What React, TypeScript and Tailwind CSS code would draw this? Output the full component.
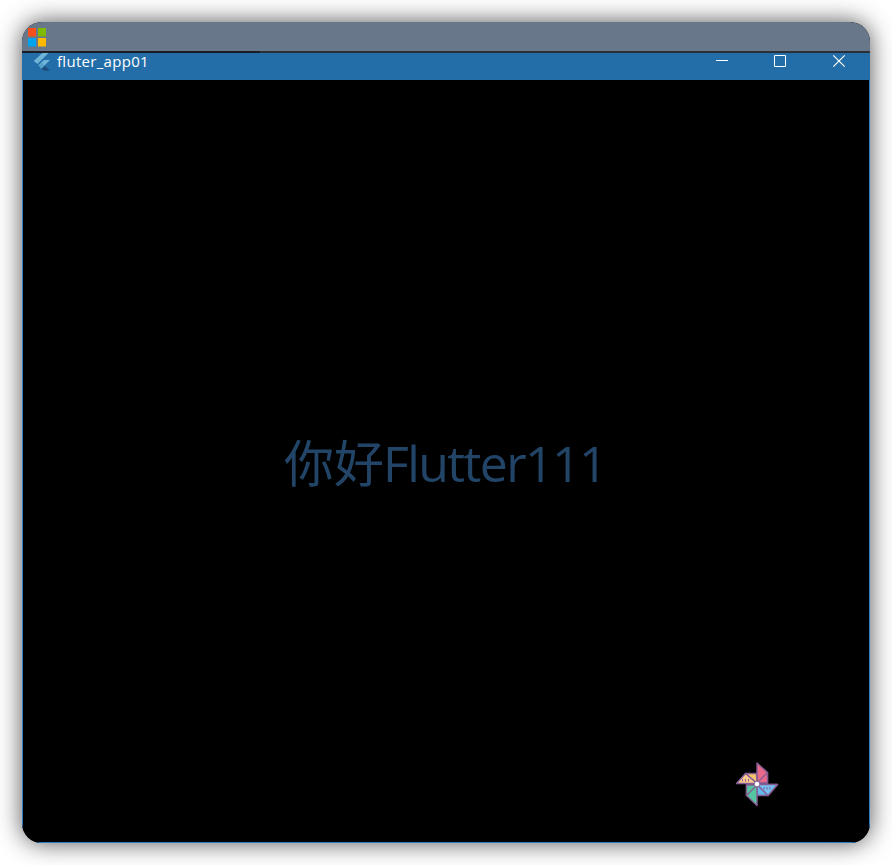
function WindowsLogo() {
  return (
    <svg className="block" width="20" height="21" viewBox="0 0 20 21">
      <path fill="#f6511d" d="M0 1h8v8.5H0z" />
      <path fill="#7fb900" d="M10 1h8v8.5H10z" />
      <path fill="#00a3ee" d="M0 11h8v8.5H0z" />
      <path fill="#ffb901" d="M10 11h8v8.5H10z" />
    </svg>
  );
}

function FlutterLogo() {
  return (
    <svg className="block" width="17" height="18" viewBox="0 0 17 18">
      <path fill="#6fb3d6" d="M8.3 0H14.5L3.5 11 -.2 8z" />
      <path fill="#6fb3d6" d="M9.9 7H16L10.5 12.5 7.5 15.5 4.5 12.3z" />
      <path fill="#1d4f7d" d="M7.5 15.5l3-2.7 5.7 5H10z" />
      <path fill="#57a3cc" d="M7.5 9.5l3 3-3 3-3-3.2z" />
    </svg>
  );
}

function Pinwheel() {
  return (
    <svg className="block" width="44" height="46" viewBox="0 0 44 46" stroke="#855d93" strokeWidth="1.4" strokeLinejoin="round">
      <path fill="#e8698a" d="M22 22V2l10.5 9.5v10.5z" />
      <path fill="#e8698a" d="M22 22l10.5-10.5v10.5z" />
      <path fill="#f7c36f" d="M22 22.5L10.5 12.5H21.5z" />
      <path fill="#fbcb90" d="M22 22.5H1.5l9-10z" />
      <path fill="#65b9ec" d="M22 23.5h20.5L33 34.5H22z" />
      <path fill="#75c3f2" d="M22 23.5h20.5L33 34.5z" />
      <path fill="#54c6a2" d="M22 24v20.5L11.5 34.5V24z" />
      <path fill="#54c6a2" d="M22 24L11.5 34.5V24z" />
      <path fill="none" strokeWidth="1" d="M7.5 18v2.5M10.5 18v2.5M13.5 18v2.5M29 26v2.5M32 26v2.5M35 26v2.5" />
      <circle cx="22" cy="23" r="2.8" fill="#fff" strokeWidth="0.9" />
    </svg>
  );
}

export default function App() {
  return (
    <div className="h-[865px] w-[892px] overflow-hidden bg-white p-[22px]">
      <div className="flex h-[821px] w-[848px] flex-col overflow-hidden rounded-[20px] bg-black shadow-[0_0_24px_rgba(0,0,0,0.68)]">
        <div className="h-[29px] shrink-0 bg-[#68778a] pt-[5px] pl-[6px]">
          <WindowsLogo />
        </div>
        <div className="flex h-[2px] shrink-0 bg-[#2a2f38]">
          <div className="w-[238px] bg-[#1b1d26]" />
        </div>
        <div className="flex h-[27px] shrink-0 items-start bg-[#236ea8] pl-[12px] text-white">
          <FlutterLogo />
          <span className="-mt-px ml-[6px] grow font-['Open_Sans','Noto_Sans',sans-serif] text-[15px] leading-[18px] tracking-[0.3px]">fluter_app01</span>
          <svg className="block shrink-0" width="154" height="18" fill="none" stroke="#fff" strokeWidth="1">
            <path d="M0 7.5h12" />
            <path d="M58.5 2.5h11v11h-11z" />
            <path d="M117.3 2.3l11.4 11.4M128.7 2.3l-11.4 11.4" strokeWidth="1.2" />
          </svg>
        </div>
        <div className="flex grow flex-col border-x border-b border-[#2a7ec6] bg-black">
          <div className="flex grow items-start pt-[345px] pl-[261px] text-[50px] leading-[70px] text-[#224567]">
            <span className="w-[100px] font-['Noto_Sans_CJK_SC',sans-serif] font-normal">你好</span>
            <span className="mt-[3px] -ml-px font-['Open_Sans','Noto_Sans',sans-serif] tracking-[-1.6px]">Flutter111</span>
          </div>
          <div className="flex justify-end pr-[90px] pb-[35px]">
            <Pinwheel />
          </div>
        </div>
      </div>
    </div>
  );
}
